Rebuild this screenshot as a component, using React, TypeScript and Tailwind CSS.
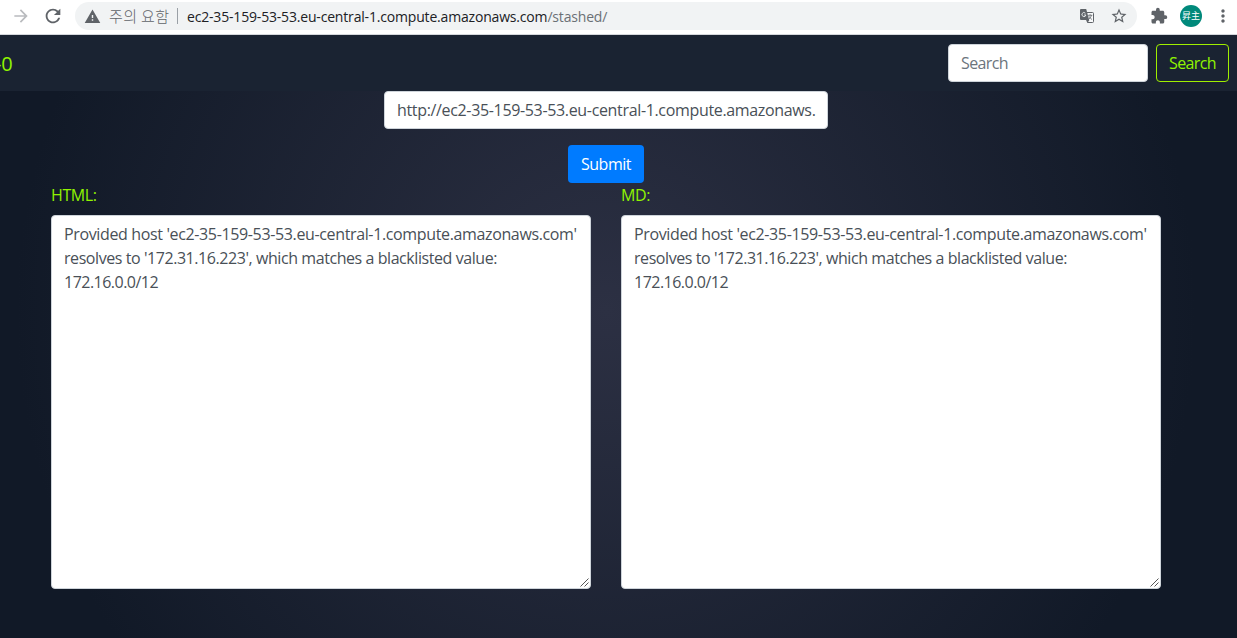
import React from "react";
import { MdArrowForward, MdRefresh, MdWarning, MdStarBorder, MdExtension, MdMoreVert } from "react-icons/md";

const OUTPUT_LINES = [
  { text: "Provided host 'ec2-35-159-53-53.eu-central-1.compute.amazonaws.com'", tracking: "tracking-[-0.36px]" },
  { text: "resolves to '172.31.16.223', which matches a blacklisted value:", tracking: "tracking-[-0.43px]" },
  { text: "172.16.0.0/12", tracking: "tracking-[-0.52px]" },
];

function TranslateIcon() {
  return (
    <svg className="mr-px ml-auto size-[14px]" viewBox="0 0 14 14" fill="none">
      <path d="M5 3.5H12.6Q13.5 3.5 13.5 4.4V12.6Q13.5 13.5 12.6 13.5H7.5Z" fill="#f8f9fa" stroke="#5f6368" />
      <path d="M1 0H6.2L9.2 11H1Q0 11 0 10V1Q0 0 1 0Z" fill="#5f6368" />
      <path d="M6.3 11L7.6 13.8L9.4 11Z" fill="#5f6368" />
      <path d="M5.4 4.2A2 2 0 1 0 5.9 6H4.1" stroke="#f1f3f4" strokeWidth="0.9" />
      <path d="M8 6.3H12.3M10.1 5.2V6.3M11.5 6.3Q10.8 8.6 9 10M9 7.3Q10 9.3 12 10.5" stroke="#5f6368" strokeWidth="0.8" />
    </svg>
  );
}

function BrowserBar() {
  return (
    <div className="flex h-[35px] shrink-0 items-start border-b border-[#d5d8dc] bg-white pt-[2px] text-[#5f6368]">
      <div className="flex h-7 w-[75px] shrink-0 items-center pl-[11px]">
        <MdArrowForward className="size-[20px] text-[#b9bbbe]" />
        <MdRefresh className="ml-[11px] size-[22px]" />
      </div>
      <div className="flex h-7 w-[1062px] shrink-0 items-center rounded-full bg-[#f1f3f4] pl-[9px] pr-[9px] text-[14px] whitespace-nowrap">
        <MdWarning className="size-[17px]" />
        <span className="ml-2 w-[61px] font-['Noto_Sans_CJK_KR',sans-serif] text-[15px] leading-5 tracking-[0.4px] font-light">주의 요함</span>
        <span className="ml-[7px] h-4 w-px bg-[#9aa0a6]" />
        <span className="ml-[9px] tracking-[-0.18px] text-[#202124]">
          ec2-35-159-53-53.eu-central-1.compute.amazonaws.com<span className="text-[#6b7075]">/stashed/</span>
        </span>
        <TranslateIcon />
        <MdStarBorder className="ml-[15px] size-[18px]" />
      </div>
      <div className="flex h-7 items-center">
        <MdExtension className="ml-[13px] size-[18px]" />
        <span className="ml-[12px] flex size-[22px] items-center justify-center rounded-full bg-[#00897b] font-['Noto_Sans_CJK_KR',sans-serif] text-[9px] text-white">昇主</span>
        <MdMoreVert className="ml-[11px] size-[20px]" />
      </div>
    </div>
  );
}

function OutputPanel({ label }: { label: string }) {
  return (
    <div className="w-[540px]">
      <div className="h-8 leading-6 tracking-[-0.4px] text-[#90f400]">{label}</div>
      <div className="flex h-[374px] flex-col rounded border border-[#ced4da] bg-white px-3 pt-[6px] leading-6 whitespace-nowrap text-[#495057]">
        {OUTPUT_LINES.map((line) => (
          <span key={line.text} className={line.tracking}>{line.text}</span>
        ))}
        <svg className="mt-auto -mr-[11px] mb-[1px] size-[9px] self-end" viewBox="0 0 9 9" stroke="#555" strokeWidth="1">
          <path d="M0.5 8.5L8.5 0.5M4.5 8.5L8.5 4.5" />
        </svg>
      </div>
    </div>
  );
}

export default function App() {
  return (
    <div className="flex h-[638px] w-[1237px] flex-col overflow-hidden bg-[#111927] font-['Open_Sans',sans-serif] text-base">
      <BrowserBar />
      <nav className="flex h-14 shrink-0 items-center bg-[#1a2332] pr-2 text-[#90f400]">
        <span className="-ml-[5px] pt-[2px] text-xl tracking-[-0.3px]">-0</span>
        <div className="ml-auto flex h-[38px] w-[200px] items-center rounded border border-[#ced4da] bg-white px-3 tracking-[-0.6px] text-[#6c757d]">Search</div>
        <button className="ml-2 h-[38px] w-[73px] rounded border border-[#9fef00] tracking-[-0.6px]">Search</button>
      </nav>
      <main className="flex grow flex-col items-center bg-[radial-gradient(circle_at_606px_220px,#2c3043,#111927_590px)] pr-[25px]">
        <div className="flex h-[38px] w-[444px] shrink-0 items-center overflow-hidden rounded border border-[#ced4da] bg-white px-3 tracking-[-0.34px] whitespace-nowrap text-[#495057]">
          http://ec2-35-159-53-53.eu-central-1.compute.amazonaws.
        </div>
        <button className="mt-4 h-[38px] w-[76px] shrink-0 rounded bg-[#007bff] tracking-[-0.5px] text-white">Submit</button>
        <div className="flex gap-[30px]">
          <OutputPanel label="HTML:" />
          <OutputPanel label="MD:" />
        </div>
      </main>
    </div>
  );
}
